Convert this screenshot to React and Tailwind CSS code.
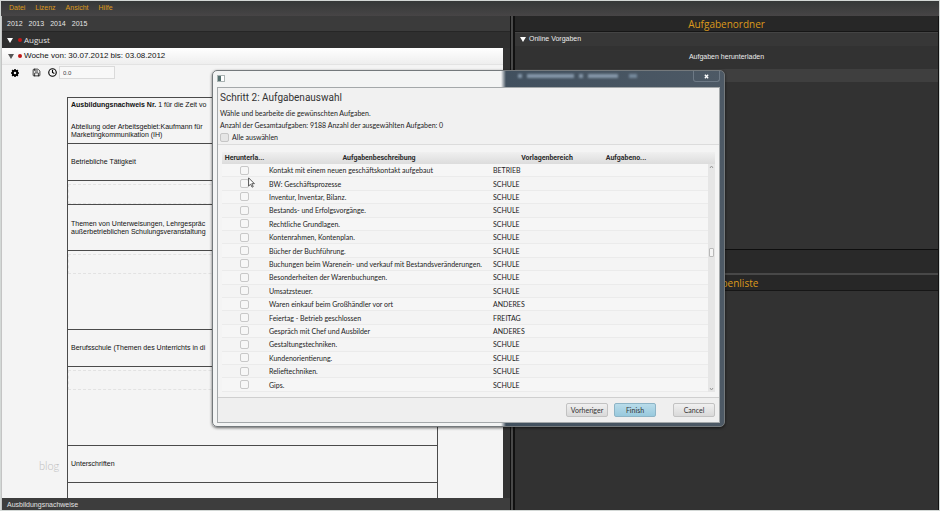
import { useState } from "react";
import { Save, Clock } from "lucide-react";

const MENU = ["Datei", "Lizenz", "Ansicht", "Hilfe"];
const YEARS = ["2012", "2013", "2014", "2015"];

const TASKS = [
  ["Kontakt mit einem neuen geschäftskontakt aufgebaut", "BETRIEB"],
  ["BW: Geschäftsprozesse", "SCHULE"],
  ["Inventur, Inventar, Bilanz.", "SCHULE"],
  ["Bestands- und Erfolgsvorgänge.", "SCHULE"],
  ["Rechtliche Grundlagen.", "SCHULE"],
  ["Kontenrahmen, Kontenplan.", "SCHULE"],
  ["Bücher der Buchführung.", "SCHULE"],
  ["Buchungen beim Warenein- und verkauf mit Bestandsveränderungen.", "SCHULE"],
  ["Besonderheiten der Warenbuchungen.", "SCHULE"],
  ["Umsatzsteuer.", "SCHULE"],
  ["Waren einkauf beim Großhändler vor ort", "ANDERES"],
  ["Feiertag - Betrieb geschlossen", "FREITAG"],
  ["Gespräch mit Chef und Ausbilder", "ANDERES"],
  ["Gestaltungstechniken.", "SCHULE"],
  ["Kundenorientierung.", "SCHULE"],
  ["Relieftechniken.", "SCHULE"],
  ["Gips.", "SCHULE"],
];

function Triangle({ className }) {
  return (
    <svg viewBox="0 0 6 5" className={`h-[5px] w-[6px] shrink-0 ${className}`} aria-hidden="true">
      <path d="M0 0h6L3 5z" fill="currentColor" />
    </svg>
  );
}

function Entry({ label }) {
  return (
    <textarea
      aria-label={label}
      className="mt-[3px] block h-[20px] w-full resize-none border border-dashed border-[#e2e2e2] bg-transparent outline-none"
    />
  );
}

function ReportForm() {
  return (
    <div className="mx-[65px] mt-[17px] flex min-h-0 flex-1 flex-col overflow-hidden border-x border-t border-[#4a4a4a] text-[7px] leading-[8px] text-[#111] *:shrink-0 *:border-b *:border-[#4a4a4a]">
      <div className="h-[46px] px-[3px] pt-[3px]">
        <p>
          <b>Ausbildungsnachweis Nr.</b> 1 für die Zeit vo
        </p>
        <p className="mt-[14px]">
          Abteilung oder Arbeitsgebiet:Kaufmann für
          <br />
          Marketingkommunikation (IH)
        </p>
      </div>
      <div className="flex h-[37px] items-center px-[3px]">Betriebliche Tätigkeit</div>
      <div className="h-[24px]">
        <Entry label="Betriebliche Tätigkeit" />
      </div>
      <div className="flex h-[46px] items-center px-[3px]">
        <p>
          Themen von Unterweisungen, Lehrgespräc
          <br />
          außerbetrieblichen Schulungsveranstaltung
        </p>
      </div>
      <div className="h-[79px]">
        <Entry label="Themen von Unterweisungen" />
      </div>
      <div className="flex h-[37px] items-center px-[3px]">
        Berufsschule (Themen des Unterrichts in di
      </div>
      <div className="h-[79px]">
        <Entry label="Berufsschule" />
      </div>
      <div className="flex h-[37px] items-center px-[3px]">Unterschriften</div>
    </div>
  );
}

function LeftPane() {
  return (
    <section className="flex w-[509px] shrink-0 flex-col border-l border-[#c4c4c4] bg-[#333]">
      <nav className="flex h-[16px] items-center gap-[6px] border-b border-[#262626] bg-[#3b3b3b] px-[5px] pt-[2px] text-[7px] text-[#e6e6e6]">
        {YEARS.map((y) => (
          <button key={y}>{y}</button>
        ))}
      </nav>
      <button className="flex h-[16px] items-center bg-[#2f2f2f] px-[5px] text-left font-['Open_Sans',sans-serif] text-[8px] text-[#e2e2e2]">
        <Triangle className="text-white" />
        <span className="ml-[5px] mr-[2px] size-[4px] rounded-full bg-[#c01818]" />
        August
      </button>
      <div className="mr-[7px] flex min-h-0 flex-1 flex-col bg-[#f4f4f4]">
        <button className="flex h-[17px] items-center border-b border-[#e3e3e3] bg-gradient-to-b from-white to-[#eee] px-[6px] text-left text-[8px] text-[#111]">
          <Triangle className="text-[#555]" />
          <span className="ml-[4px] mr-[2px] size-[4px] rounded-full bg-[#c01818]" />
          Woche von: 30.07.2012 bis: 03.08.2012
        </button>
        <div className="flex h-[15px] items-center px-[9px] text-black">
          <button aria-label="Einstellungen">
            <svg viewBox="0 0 16 16" className="size-[8px]">
              <circle cx="8" cy="8" r="4.5" fill="none" stroke="currentColor" strokeWidth="4" />
              <path
                d="M8 0v3M8 13v3M0 8h3M13 8h3M2.3 2.3l2 2M11.7 11.7l2 2M2.3 13.7l2-2M11.7 4.3l2-2"
                stroke="currentColor"
                strokeWidth="3"
              />
            </svg>
          </button>
          <button aria-label="Speichern" className="ml-[13px]">
            <Save className="size-[9px]" strokeWidth={2} />
          </button>
          <button aria-label="Zeit" className="ml-[7px]">
            <Clock className="size-[9px]" strokeWidth={3} />
          </button>
          <input
            aria-label="Stunden"
            defaultValue="0.0"
            className="ml-[2px] h-[13px] w-[56px] border border-[#dadada] bg-[#f8f8f8] px-[3px] text-[6px] text-[#444] outline-none"
          />
        </div>
        <div className="relative flex min-h-0 flex-1 flex-col">
          <ReportForm />
          <span className="absolute bottom-[25px] left-[37px] font-[Lato,sans-serif] text-[11px] font-light leading-[14px] text-[#bdbdbd]">
            blog
          </span>
        </div>
      </div>
      <button className="h-[12px] bg-[#3d3d3d] px-[5px] pt-[2px] text-left text-[7px] leading-[10px] text-[#e2e2e2]">
        Ausbildungsnachweise
      </button>
    </section>
  );
}

function PaneTitle({ children }) {
  return (
    <h2 className="h-[16px] shrink-0 border-b border-[#161616] bg-[#272727] text-center font-['Open_Sans',sans-serif] text-[10px] leading-[16px] text-[#dc9a1c]">
      {children}
    </h2>
  );
}

function RightPane() {
  return (
    <section className="flex min-w-0 flex-1 flex-col border-l-2 border-r border-[#111] bg-[#323232]">
      <PaneTitle>Aufgabenordner</PaneTitle>
      <button className="flex h-[14px] shrink-0 items-center gap-[3px] border-t border-[#444] bg-[#373737] px-[5px] text-[7px] text-[#ededed]">
        <Triangle className="text-white" />
        Online Vorgaben
      </button>
      <button className="h-[23px] shrink-0 text-center text-[7px] text-[#ededed]">
        Aufgaben herunterladen
      </button>
      <div className="h-[13px] shrink-0 bg-[#3f3f3f]" />
      <div className="h-[167px] shrink-0" />
      <div className="h-[26px] shrink-0 border-b-2 border-t border-b-[#484848] border-t-[#0e0e0e] bg-[#292929]" />
      <PaneTitle>Aufgabenliste</PaneTitle>
      <div className="flex-1" />
    </section>
  );
}

const BUTTON =
  "h-[14px] w-[42px] rounded-[2px] border text-center text-[7px] leading-[12px] text-[#333]";

function Wizard() {
  const [picked, setPicked] = useState({});
  return (
    <div
      role="dialog"
      aria-label="Aufgabenauswahl"
      className="absolute left-[211px] top-[69px] flex w-[513px] flex-col rounded-[5px] border border-[#74797c] bg-[linear-gradient(to_right,#f3f4f4_288px,#41505e_293px,#4d5965)] px-[4px] pb-[3px] font-[Lato,sans-serif] text-[7px] text-[#222] shadow-[0_1px_3px_rgba(0,0,0,0.6)]"
    >
      <div className="flex h-[16px] items-start justify-between">
        <span className="mt-[4px] flex h-[7px] w-[8px] border border-[#aab3b3] bg-white">
          <span className="w-[3px] bg-[#54706f]" />
        </span>
        <span className="ml-auto mr-[56px] mt-[3px] flex gap-[5px] blur-[1px]">
          <span className="h-[4px] w-[4px] bg-[#8496a8]" />
          <span className="h-[4px] w-[47px] bg-[#8496a8]" />
          <span className="h-[4px] w-[4px] bg-[#8496a8]" />
          <span className="h-[4px] w-[30px] bg-[#8496a8]" />
          <span className="ml-[6px] h-[4px] w-[8px] bg-[#75889b]" />
        </span>
        <button
          aria-label="Schließen"
          className="flex h-[11px] w-[27px] items-center justify-center rounded-b-[3px] border border-t-0 border-[#6d7985]"
        >
          <svg viewBox="0 0 6 6" className="size-[5px]">
            <path d="M1 1l4 4M5 1L1 5" stroke="#fff" strokeWidth="1.6" />
          </svg>
        </button>
      </div>

      <div className="flex flex-col border border-[#a4a8aa] bg-[#f4f4f4]">
        <header className="flex h-[57px] flex-col border-b border-[#dcdcdc] bg-[#f1f1f1] px-[2px]">
          <h1 className="mt-[2px] font-[Roboto,sans-serif] text-[10px] leading-[16px] text-[#333]">
            Schritt 2: Aufgabenauswahl
          </h1>
          <p className="mt-[1px] leading-[12px]">Wähle und bearbeite die gewünschten Aufgaben.</p>
          <p className="leading-[12px]">
            Anzahl der Gesamtaufgaben: 9188 Anzahl der ausgewählten Aufgaben: 0
          </p>
          <label className="flex h-[12px] items-center gap-[3px]">
            <input
              type="checkbox"
              className="size-[9px] appearance-none rounded-[2px] border border-[#c6c6c6] bg-[#e6e6e6] checked:bg-[#6ab0d0]"
            />
            Alle auswählen
          </label>
        </header>

        <div className="mt-[7px] flex h-[240px] px-[4px]">
          <div className="flex min-w-0 flex-1 flex-col">
            <table className="h-full w-full table-fixed border-collapse">
              <colgroup>
                <col className="w-[45px]" />
                <col className="w-[224px]" />
                <col className="w-[112px]" />
                <col className="w-[46px]" />
                <col />
              </colgroup>
              <thead>
                <tr className="h-[12px] bg-gradient-to-b from-[#f0f0f0] to-[#dcdcdc] font-[Roboto,sans-serif] leading-[10px] text-[#2b2b2b]">
                  <th className="whitespace-nowrap p-0">Herunterla...</th>
                  <th className="p-0">Aufgabenbeschreibung</th>
                  <th className="p-0">Vorlagenbereich</th>
                  <th className="whitespace-nowrap p-0">Aufgabeno...</th>
                  <th className="p-0" />
                </tr>
              </thead>
              <tbody>
                {TASKS.map(([name, area], i) => (
                  <tr key={name} className="border-b border-[#ebebeb] leading-[10px] odd:bg-[#f6f6f6]">
                    <td className="p-0">
                      <input
                        type="checkbox"
                        aria-label={name}
                        checked={!!picked[i]}
                        onChange={() => setPicked({ ...picked, [i]: !picked[i] })}
                        className="mx-auto block size-[9px] appearance-none rounded-[2px] border border-[#c8c8c8] bg-[#f7f7f7] checked:bg-[#6ab0d0]"
                      />
                    </td>
                    <td className="whitespace-nowrap p-0 pl-[2px]">{name}</td>
                    <td className="p-0 pl-[2px]">{area}</td>
                    <td className="p-0" />
                    <td className="p-0" />
                  </tr>
                ))}
              </tbody>
            </table>
          </div>
          <div className="flex w-[7px] flex-col bg-[#e6e6e6]">
            <div className="h-[12px] bg-gradient-to-b from-[#f0f0f0] to-[#dcdcdc]" />
            <svg viewBox="0 0 7 5" className="h-[5px] w-[7px]">
              <path d="M2 4l1.500-2L5 4" fill="none" stroke="#999" />
            </svg>
            <div className="mx-[1px] mt-[79px] h-[9px] rounded-[1px] border border-[#b9b9b9] bg-[#f4f4f4]" />
            <svg viewBox="0 0 7 5" className="mt-auto h-[5px] w-[7px]">
              <path d="M2 1l1.500 2L5 1" fill="none" stroke="#999" />
            </svg>
          </div>
        </div>

        <footer className="mt-[5px] flex h-[25px] items-center border-t border-[#cfcfcf] bg-[#efefef] px-[4px]">
          <button
            className={`${BUTTON} ml-auto border-[#c2c2c2] bg-gradient-to-b from-[#f0f0f0] to-[#d9d9d9]`}
          >
            Vorheriger
          </button>
          <button
            className={`${BUTTON} ml-[6px] border-[#8db4c6] bg-gradient-to-b from-[#b9dcea] to-[#98c9dd]`}
          >
            Finish
          </button>
          <button
            className={`${BUTTON} ml-[17px] border-[#c2c2c2] bg-gradient-to-b from-[#f0f0f0] to-[#d9d9d9]`}
          >
            Cancel
          </button>
        </footer>
      </div>

      <svg viewBox="0 0 12 18" className="absolute left-[35px] top-[106px] h-[11px] w-[7px]" aria-hidden="true">
        <path
          d="M1 1v14l3.500-3 2.500 5 2-1-2.500-5H11z"
          fill="#fff"
          stroke="#444"
          strokeWidth="1.500"
        />
      </svg>
    </div>
  );
}

export default function App() {
  return (
    <div className="relative flex h-screen flex-col border border-[#d3d8d6] bg-[#323232] font-['Liberation_Sans',Arial,sans-serif]">
      <nav className="flex h-[15px] shrink-0 items-center gap-[10px] bg-gradient-to-b from-[#353838] to-[#474546] px-[8px] text-[7px] text-[#dc9a1c]">
        {MENU.map((m) => (
          <button key={m}>{m}</button>
        ))}
      </nav>
      <div className="flex min-h-0 flex-1">
        <LeftPane />
        <div className="w-[3px] shrink-0 border-l border-[#111] bg-[#4a4a4a]" />
        <RightPane />
      </div>
      <Wizard />
    </div>
  );
}
